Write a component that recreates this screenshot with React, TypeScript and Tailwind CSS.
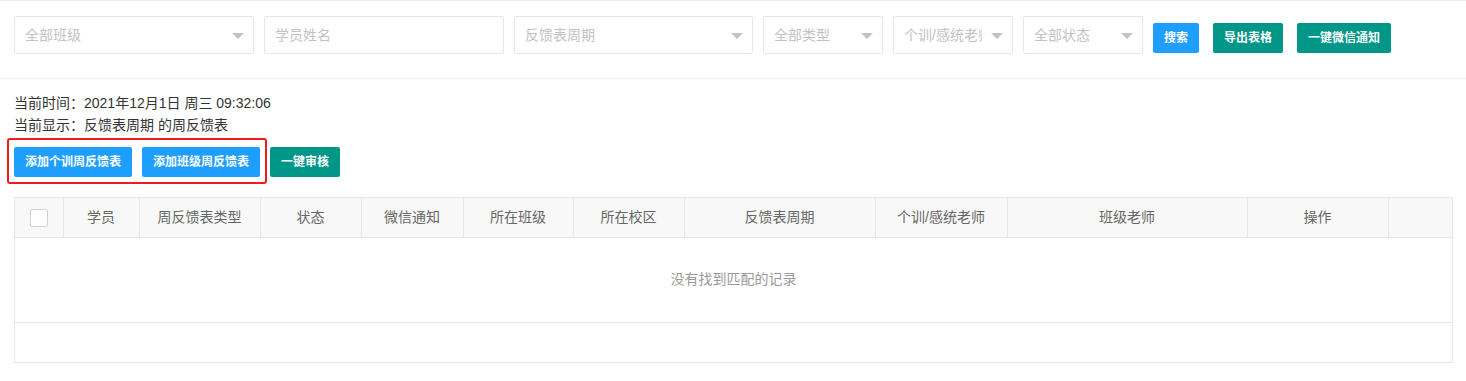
const selects = [
  { label: '全部班级', w: 'w-[240px]', arrow: true },
  { label: '学员姓名', w: 'w-[240px]', arrow: false },
  { label: '反馈表周期', w: 'w-[239px]', arrow: true },
  { label: '全部类型', w: 'w-[120px]', arrow: true },
  { label: '个训/感统老师', w: 'w-[120px]', arrow: true },
  { label: '全部状态', w: 'w-[120px]', arrow: true },
];

const columns = [
  { title: '', w: 48 },
  { title: '学员', w: 76 },
  { title: '周反馈表类型', w: 121 },
  { title: '状态', w: 101 },
  { title: '微信通知', w: 102 },
  { title: '所在班级', w: 110 },
  { title: '所在校区', w: 111 },
  { title: '反馈表周期', w: 191 },
  { title: '个训/感统老师', w: 132 },
  { title: '班级老师', w: 240 },
  { title: '操作', w: 141 },
  { title: '', w: 64 },
];

function Btn({ children, color }: { children: React.ReactNode; color: 'blue' | 'teal' }) {
  return (
    <button
      className={`h-[30px] px-[11px] rounded-[2px] text-[12px] font-bold text-white leading-[30px] whitespace-nowrap ${
        color === 'blue' ? 'bg-[#1E9FFF]' : 'bg-[#009688]'
      }`}
    >
      {children}
    </button>
  );
}

export default function App() {
  return (
    <div
      className="w-[1466px] h-[381px] bg-white text-[#333] overflow-hidden"
      style={{ fontFamily: '"Liberation Sans", "Noto Sans CJK SC", sans-serif' }}
    >
      {/* Filter bar */}
      <div className="h-[79px] border-t border-b border-[#eeeeee] px-[14px] pt-[15px] flex items-start">
        <div className="flex gap-[10px]">
          {selects.map((s) => (
            <div
              key={s.label}
              className={`${s.w} h-[38px] border border-[#e6e6e6] rounded-[2px] bg-white relative flex items-center pl-[10px] pr-[30px] overflow-hidden`}
            >
              <span className="text-[14px] text-[#c2c2c2] whitespace-nowrap overflow-hidden">{s.label}</span>
              {s.arrow && (
                <span className="absolute right-[9px] top-[16px] w-0 h-0 border-l-[6px] border-r-[6px] border-t-[6px] border-l-transparent border-r-transparent border-t-[#c2c2c2]" />
              )}
            </div>
          ))}
        </div>
        <div className="flex gap-[14px] ml-[10px] mt-[7px]">
          <Btn color="blue">搜索</Btn>
          <Btn color="teal">导出表格</Btn>
          <Btn color="teal">一键微信通知</Btn>
        </div>
      </div>

      {/* Info */}
      <div className="px-[14px] pt-[13px] text-[14px] leading-[22px]">
        <div>当前时间：2021年12月1日 周三 09:32:06</div>
        <div>当前显示：反馈表周期 的周反馈表</div>
        <div className="relative flex gap-[10px] mt-[11px]">
          <Btn color="blue">添加个训周反馈表</Btn>
          <Btn color="blue">添加班级周反馈表</Btn>
          <Btn color="teal">一键审核</Btn>
          <div className="absolute left-[-7px] top-[-9px] w-[260px] h-[46px] border-2 border-[#ee1c1c] rounded-[3px] pointer-events-none" />
        </div>
      </div>

      {/* Table */}
      <div className="ml-[14px] mr-[13px] mt-[20px] border border-[#e6e6e6]">
        <table className="w-full table-fixed border-collapse">
          <colgroup>
            {columns.map((c, i) => (
              <col key={i} style={{ width: c.w }} />
            ))}
          </colgroup>
          <thead>
            <tr className="h-[39px] bg-[#f8f8f8]">
              {columns.map((c, i) => (
                <th
                  key={i}
                  className={`font-normal text-[14px] text-[#666] text-center ${
                    i < columns.length - 1 ? 'border-r border-[#e6e6e6]' : ''
                  }`}
                >
                  {i === 0 ? (
                    <span className="inline-block w-[18px] h-[18px] border border-[#d2d2d2] rounded-[2px] bg-white align-middle" />
                  ) : (
                    c.title
                  )}
                </th>
              ))}
            </tr>
          </thead>
          <tbody>
            <tr className="h-[85px] border-t border-[#e6e6e6]">
              <td colSpan={columns.length} className="text-center text-[14px] text-[#999]">
                没有找到匹配的记录
              </td>
            </tr>
          </tbody>
        </table>
        <div className="h-[40px] border-t border-[#e6e6e6]" />
      </div>
    </div>
  );
}
